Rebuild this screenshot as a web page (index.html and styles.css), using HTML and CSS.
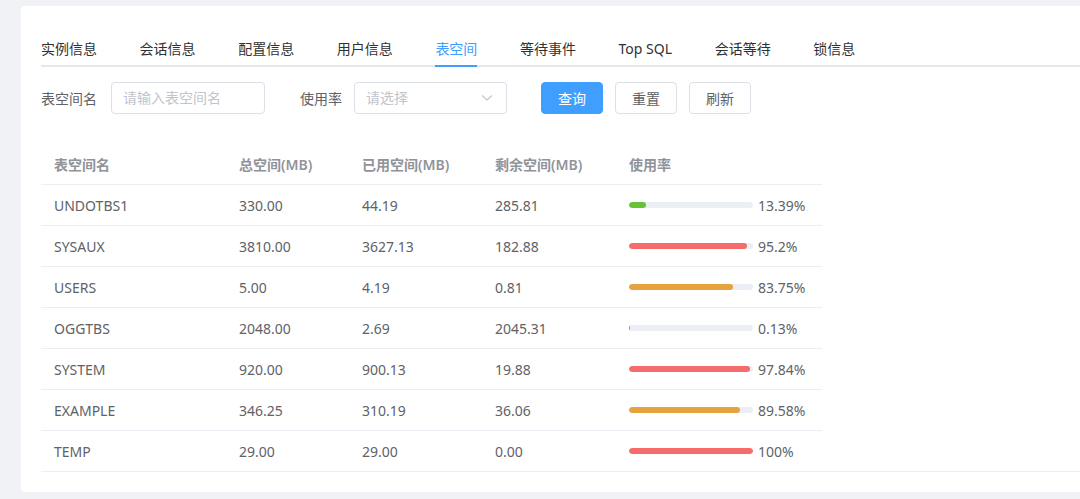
FILE: index.html
```html
<!DOCTYPE html>
<html lang="zh-CN">
<head>
    <meta charset="UTF-8">
    <meta name="viewport" content="width=device-width, initial-scale=1.0">
    <title>表空间</title>
    <link rel="stylesheet" href="styles.css">
</head>
<body>
    <div class="page">
        <div class="card">
            <div class="tabs">
                <div class="tab">实例信息</div>
                <div class="tab">会话信息</div>
                <div class="tab">配置信息</div>
                <div class="tab">用户信息</div>
                <div class="tab active">表空间</div>
                <div class="tab">等待事件</div>
                <div class="tab">Top SQL</div>
                <div class="tab">会话等待</div>
                <div class="tab">锁信息</div>
            </div>

            <div class="search">
                <label class="label">表空间名</label>
                <div class="input">请输入表空间名</div>
                <label class="label second">使用率</label>
                <div class="input select">
                    <span>请选择</span>
                    <svg width="12" height="8" viewBox="0 0 12 8"><polyline points="1,1.5 6,6 11,1.5" fill="none" stroke="#c0c4cc" stroke-width="1.1"/></svg>
                </div>
                <button class="btn primary">查询</button>
                <button class="btn">重置</button>
                <button class="btn">刷新</button>
            </div>

            <div class="table-wrap">
                <table class="table">
                    <colgroup>
                        <col style="width:185px">
                        <col style="width:123px">
                        <col style="width:133px">
                        <col style="width:134px">
                        <col style="width:206px">
                    </colgroup>
                    <thead>
                        <tr>
                            <th>表空间名</th>
                            <th>总空间(MB)</th>
                            <th>已用空间(MB)</th>
                            <th>剩余空间(MB)</th>
                            <th>使用率</th>
                        </tr>
                    </thead>
                    <tbody>
                        <tr>
                            <td>UNDOTBS1</td><td>330.00</td><td>44.19</td><td>285.81</td>
                            <td><div class="progress"><div class="bar"><div class="fill green" style="width:13.39%"></div></div><span>13.39%</span></div></td>
                        </tr>
                        <tr>
                            <td>SYSAUX</td><td>3810.00</td><td>3627.13</td><td>182.88</td>
                            <td><div class="progress"><div class="bar"><div class="fill red" style="width:95.2%"></div></div><span>95.2%</span></div></td>
                        </tr>
                        <tr>
                            <td>USERS</td><td>5.00</td><td>4.19</td><td>0.81</td>
                            <td><div class="progress"><div class="bar"><div class="fill orange" style="width:83.75%"></div></div><span>83.75%</span></div></td>
                        </tr>
                        <tr>
                            <td>OGGTBS</td><td>2048.00</td><td>2.69</td><td>2045.31</td>
                            <td><div class="progress"><div class="bar"><div class="fill green" style="width:0.13%"></div></div><span>0.13%</span></div></td>
                        </tr>
                        <tr>
                            <td>SYSTEM</td><td>920.00</td><td>900.13</td><td>19.88</td>
                            <td><div class="progress"><div class="bar"><div class="fill red" style="width:97.84%"></div></div><span>97.84%</span></div></td>
                        </tr>
                        <tr>
                            <td>EXAMPLE</td><td>346.25</td><td>310.19</td><td>36.06</td>
                            <td><div class="progress"><div class="bar"><div class="fill orange" style="width:89.58%"></div></div><span>89.58%</span></div></td>
                        </tr>
                        <tr>
                            <td>TEMP</td><td>29.00</td><td>29.00</td><td>0.00</td>
                            <td><div class="progress"><div class="bar"><div class="fill red" style="width:100%"></div></div><span>100%</span></div></td>
                        </tr>
                    </tbody>
                </table>
            </div>
        </div>
    </div>
</body>
</html>
```

FILE: styles.css
```css
html, body {
    margin: 0;
    height: 100%;
    overflow: hidden;
}
body {
    background-color: #f0f2f5;
    font-family: "Noto Sans", "Noto Sans CJK SC", sans-serif;
    font-size: 14px;
    color: #606266;
}
.page {
    padding: 6px 0 0 21px;
}
.card {
    margin-right: -20px;
    padding: 22px 20px 20px 20px;
    background-color: #fff;
    border-radius: 4px;
}
.tabs {
    display: flex;
    border-bottom: 2px solid #e4e7ed;
    margin-bottom: 15px;
}
.tab {
    position: relative;
    height: 37px;
    line-height: 41px;
    padding: 0 21.3px;
    color: #303133;
    white-space: nowrap;
}
.tab:first-child {
    padding-left: 0;
}
.tab.active {
    color: #409eff;
}
.tab.active::after {
    content: "";
    position: absolute;
    left: 21.3px;
    right: 21.3px;
    bottom: -2px;
    height: 2px;
    background-color: #409eff;
}
.search {
    display: flex;
    align-items: center;
    height: 32px;
    margin-bottom: 30px;
}
.label {
    color: #606266;
    margin-right: 14px;
}
.label.second {
    margin-left: 35px;
    margin-right: 12px;
}
.input {
    box-sizing: border-box;
    width: 154px;
    height: 32px;
    line-height: 30px;
    padding: 0 11px;
    border: 1px solid #dcdfe6;
    border-radius: 4px;
    color: #c0c4cc;
}
.select {
    width: 153px;
    display: flex;
    justify-content: space-between;
    align-items: center;
    padding-right: 13px;
}
.btn {
    box-sizing: border-box;
    height: 32px;
    padding: 0 16px;
    margin-left: 12px;
    border: 1px solid #dcdfe6;
    border-radius: 4px;
    background-color: #fff;
    color: #606266;
    font-family: inherit;
    font-size: 14px;
    cursor: pointer;
}
.btn.primary {
    margin-left: 34px;
    background-color: #409eff;
    border-color: #409eff;
    color: #fff;
}
.table-wrap {
    border-bottom: 1px solid #ebeef5;
}
.table {
    border-collapse: collapse;
    table-layout: fixed;
    width: 781px;
}
.table th,
.table td {
    height: 40px;
    padding: 0 13px;
    text-align: left;
    border-bottom: 1px solid #ebeef5;
    white-space: nowrap;
}
.table th {
    color: #909399;
    font-weight: 600;
}
.table tbody tr:last-child td {
    border-bottom: none;
}
.progress {
    display: flex;
    align-items: center;
}
.bar {
    width: 124px;
    height: 6px;
    border-radius: 3px;
    background-color: #ebeef5;
    overflow: hidden;
}
.fill {
    min-width: 1px;
    height: 100%;
    border-radius: 3px;
}
.fill.green {
    background-color: #67c23a;
}
.fill.orange {
    background-color: #e6a23c;
}
.fill.red {
    background-color: #f56c6c;
}
.progress span {
    margin-left: 5px;
}
```
